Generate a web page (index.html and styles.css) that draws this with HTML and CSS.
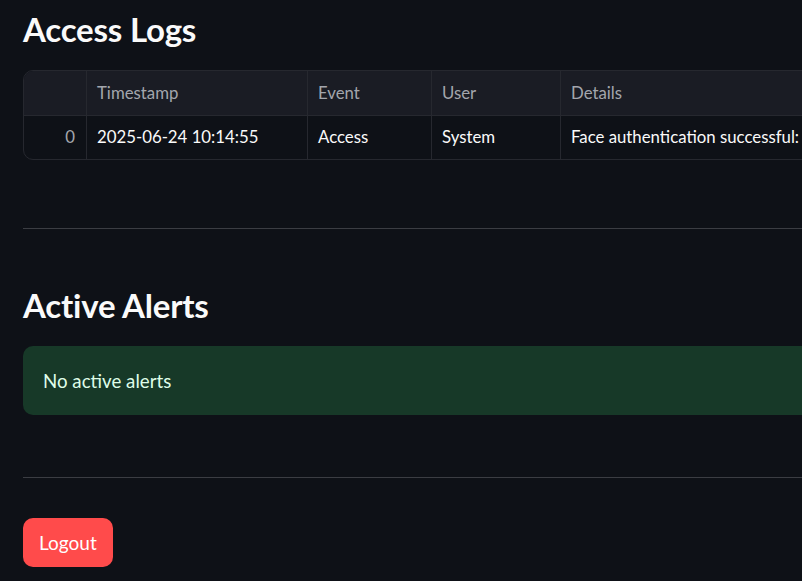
FILE: index.html
```html
<!DOCTYPE html>
<html>
<head>
<meta charset="utf-8">
<link rel="stylesheet" href="styles.css">
</head>
<body>
<main class="page">
  <h2 class="title">Access Logs</h2>
  <div class="grid-wrap">
    <div class="grid">
      <div class="cell head idx"></div>
      <div class="cell head">Timestamp</div>
      <div class="cell head">Event</div>
      <div class="cell head">User</div>
      <div class="cell head last">Details</div>
      <div class="cell idx num">0</div>
      <div class="cell">2025-06-24 10:14:55</div>
      <div class="cell">Access</div>
      <div class="cell">System</div>
      <div class="cell last">Face authentication successful:</div>
    </div>
  </div>
  <hr class="rule rule-1">
  <h2 class="title title-2">Active Alerts</h2>
  <div class="alert">No active alerts</div>
  <hr class="rule rule-2">
  <button class="btn">Logout</button>
</main>
</body>
</html>
```
FILE: styles.css
```css
html, body {
  margin: 0;
  padding: 0;
  background: #0e1117;
  overflow: hidden;
}
body {
  font-family: "Lato", "Noto Sans", sans-serif;
  color: #fafafa;
}
.page {
  width: 1100px;
  padding: 8px 0 0 23px;
  display: flex;
  flex-direction: column;
  align-items: flex-start;
}
.title {
  margin: 0;
  font-size: 33px;
  line-height: 42px;
  font-weight: 700;
  letter-spacing: -0.2px;
}
.grid-wrap {
  margin-top: 20px;
  width: 1000px;
  border: 1px solid #26282f;
  border-radius: 10px;
  overflow: hidden;
}
.grid {
  display: grid;
  grid-template-columns: 63px 221px 124px 129px 1fr;
  grid-template-rows: 45px 43px;
  font-size: 16.8px;
}
.cell {
  display: flex;
  align-items: center;
  padding: 0 10px 2px;
  border-right: 1px solid #26282f;
  white-space: nowrap;
  overflow: hidden;
}
.cell.last { border-right: none; }
.cell.head {
  background: #1a1c24;
  color: #a3a6ad;
  border-bottom: 1px solid #26282f;
  padding-bottom: 1px;
}
.cell.num {
  justify-content: flex-end;
  color: #a3a6ad;
  padding-right: 11px;
}
.rule {
  width: 1000px;
  margin: 0;
  border: none;
  border-top: 1px solid #3b3d43;
  height: 0;
}
.rule-1 { margin-top: 68px; }
.title-2 { margin-top: 55px; }
.alert {
  margin-top: 20px;
  width: 980px;
  height: 69px;
  box-sizing: border-box;
  padding: 0 20px;
  display: flex;
  align-items: center;
  background: #173928;
  color: #dffde9;
  border-radius: 10px;
  font-size: 18.7px;
}
.rule-2 { margin-top: 62px; }
.btn {
  margin-top: 40px;
  height: 49px;
  padding: 0 16px;
  background: #ff4b4b;
  color: #fff;
  border: none;
  border-radius: 10px;
  font-family: inherit;
  font-size: 19px;
}
```
